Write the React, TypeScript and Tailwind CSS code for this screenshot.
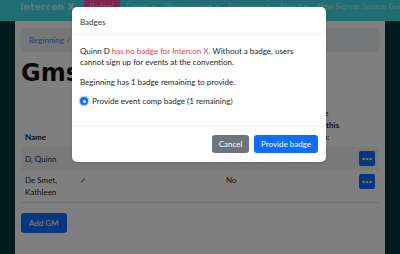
import React from "react";

const NavItem = ({ label, caret = true }: { label: string; caret?: boolean }) => (
  <span className="px-[4px] whitespace-nowrap text-white/60">
    {label}
    {caret && <span className="ml-[2px] text-[6px]">▼</span>}
  </span>
);

export default function App() {
  return (
    <div className="relative w-[400px] h-[254px] overflow-hidden bg-[#00363a] font-['Lato',sans-serif] text-[8px] text-[#212529]">
      {/* navbar, page is scrolled a little so its top is cut */}
      <nav className="h-[21px] bg-[#40dde2] flex items-start overflow-hidden">
        <div className="mt-[1px] ml-[20px] mr-[9px] font-['DejaVu_Sans',sans-serif] font-bold text-[9px] leading-[12px] tracking-[0.2px] text-white/70 whitespace-nowrap">
          Intercon X
        </div>
        <div className="flex items-start -mt-[2px] leading-[12px] text-[8px]">
          <span className="bg-[#ff4aa8] px-[6px] pt-[2px] pb-[1px] text-white/60">Badge!</span>
          <div className="flex pt-[2px] pl-[2px]">
            <NavItem label="Events" />
            <NavItem label="Programming" />
            <NavItem label="Resources" />
            <NavItem label="About" />
            <NavItem label="New Signup System Guide" caret={false} />
          </div>
        </div>
      </nav>

      {/* page */}
      <main className="mx-[15px] h-[233px] bg-white px-[6px] pt-[7px]">
        <div className="h-[24px] rounded-[3px] bg-[#e9ecef] px-[8px] flex items-center">
          <a className="text-[#4a86e0]">Beginning</a>
          <span className="ml-[3px] text-[#6c757d]">/</span>
          <span className="ml-[3px] text-[#6c757d]">Gms</span>
        </div>

        <h1 className="mt-[6px] font-['DejaVu_Sans',sans-serif] font-bold text-[24px] leading-[30px] text-[#111]">
          Gms
        </h1>

        <table className="mt-[15px] w-full border-collapse leading-[12px]">
          <thead>
            <tr className="font-bold align-bottom">
              <th className="text-left px-[4px] py-[4px] w-[55px]">Name</th>
              <th className="text-left px-[4px] py-[4px] w-[146px]"></th>
              <th className="text-left px-[4px] py-[4px] w-[88px]"></th>
              <th className="text-left px-[4px] py-[4px]">
                free
                <br />
                for this
                <br />
                con:
              </th>
              <th className="px-[4px] py-[4px] w-[24px]"></th>
            </tr>
          </thead>
          <tbody>
            <tr className="bg-[#f2f2f2] align-top">
              <td className="px-[4px] py-[4px] pt-[6px]">D, Quinn</td>
              <td className="px-[4px] py-[4px]"></td>
              <td className="px-[4px] py-[4px]"></td>
              <td className="px-[4px] py-[4px]"></td>
              <td className="px-[4px] py-[4px]">
                <button className="w-[16px] h-[15px] rounded-[2px] bg-[#0d6efd] text-white text-[6px] leading-[15px]">•••</button>
              </td>
            </tr>
            <tr className="align-top border-b border-[#dee2e6]">
              <td className="px-[4px] py-[4px]">
                De Smet,
                <br />
                Kathleen
              </td>
              <td className="px-[4px] py-[4px] text-[7px]">✓</td>
              <td className="px-[4px] py-[4px]">No</td>
              <td className="px-[4px] py-[4px]"></td>
              <td className="px-[4px] py-[4px]">
                <button className="w-[16px] h-[15px] rounded-[2px] bg-[#0d6efd] text-white text-[6px] leading-[15px]">•••</button>
              </td>
            </tr>
          </tbody>
        </table>

        <button className="mt-[10px] h-[20px] px-[8px] rounded-[3px] bg-[#0d6efd] text-white">Add GM</button>
      </main>

      {/* backdrop */}
      <div className="absolute inset-0 bg-black/50"></div>

      {/* modal */}
      <div className="absolute left-[72px] top-[7px] w-[254px] rounded-[5px] bg-white shadow-sm">
        <div className="h-[28px] px-[8px] pt-[2px] flex items-center border-b border-[#f0f0f0] text-[#333]">Badges</div>
        <div className="px-[8px] pt-[11px] pb-[19px] text-[8px] leading-[10.7px] text-[#212529]">
          <p>
            Quinn D <span className="text-[#e8404f]">has no badge for Intercon X.</span> Without a badge, users
            cannot sign up for events at the convention.
          </p>
          <p className="mt-[10px]">Beginning has 1 badge remaining to provide.</p>
          <label className="mt-[8px] flex items-center">
            <span className="w-[8px] h-[8px] rounded-full bg-[#0d6efd] flex items-center justify-center ring-[1.5px] ring-[#b6d4fe]">
              <span className="w-[3px] h-[3px] rounded-full bg-white"></span>
            </span>
            <span className="ml-[4px]">Provide event comp badge (1 remaining)</span>
          </label>
        </div>
        <div className="h-[36px] px-[8px] flex items-center justify-end gap-[5px] border-t border-[#f0f0f0]">
          <button className="h-[18px] w-[37px] rounded-[3px] bg-[#6c757d] text-white">Cancel</button>
          <button className="h-[18px] w-[64px] rounded-[3px] bg-[#0d6efd] text-white">Provide badge</button>
        </div>
      </div>
    </div>
  );
}
